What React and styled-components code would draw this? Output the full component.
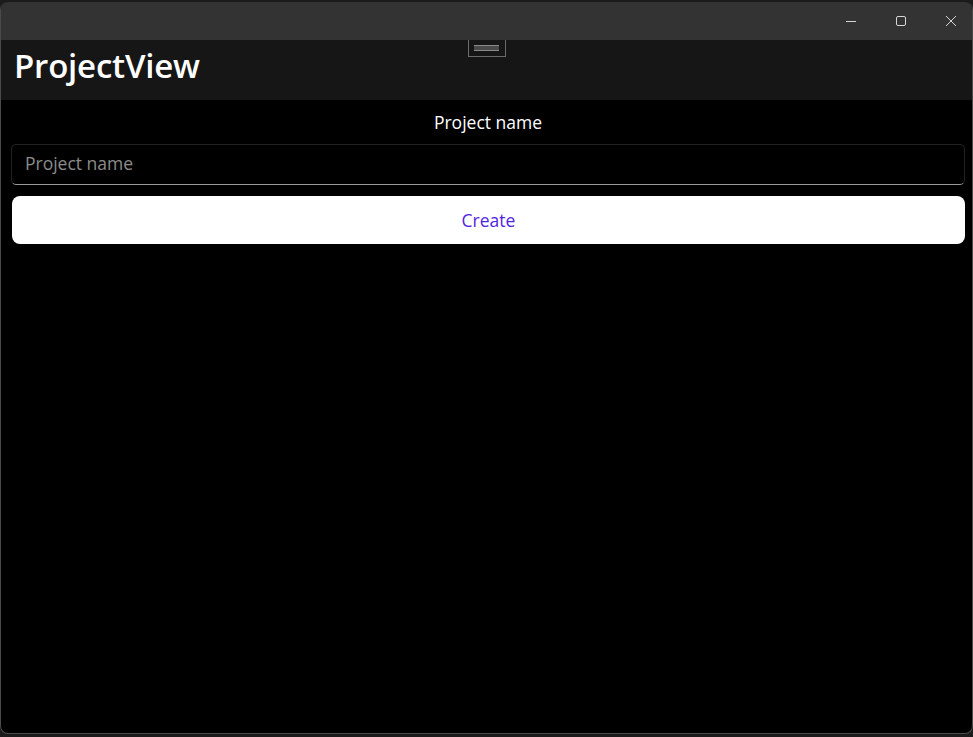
import React from 'react';
import styled, { createGlobalStyle } from 'styled-components';

const GlobalStyle = createGlobalStyle`
  html, body {
    margin: 0;
    padding: 0;
    background: #1b1b1b;
    font-family: "Open Sans", "Noto Sans", sans-serif;
  }
  * { box-sizing: border-box; }
`;

const Desktop = styled.div`
  height: 737px;
  padding-top: 2px;
  overflow: hidden;
`;

const Window = styled.div`
  height: 732px;
  display: flex;
  flex-direction: column;
  background: #000;
  border: 1px solid #4a4a4a;
  border-top: none;
  border-radius: 8px;
  overflow: hidden;
`;

const TitleBar = styled.div`
  height: 38px;
  background: #333333;
  display: flex;
  justify-content: flex-end;
  align-items: center;
  padding-right: 0;
`;

const WinButton = styled.button`
  width: 50px;
  height: 38px;
  border: none;
  background: transparent;
  display: flex;
  align-items: center;
  justify-content: center;
  padding: 0 0 0 8px;
  color: #d6d6d6;
`;

const Header = styled.header`
  height: 60px;
  background: #161616;
  display: flex;
  flex-direction: column;
  align-items: center;
  padding: 0 13px;
`;

const Handle = styled.div`
  width: 38px;
  height: 17px;
  border: 1px solid #6b6b6b;
  border-top: none;
  display: flex;
  align-items: center;
  justify-content: center;

  &::before {
    content: "";
    width: 25px;
    height: 4px;
    border-top: 1px solid #8a8a8a;
    border-bottom: 1px solid #8a8a8a;
    background: #4a4a4a;
  }
`;

const AppTitle = styled.h1`
  align-self: flex-start;
  margin: -13px 0 0;
  color: #fff;
  font-size: 33px;
  font-weight: 600;
  line-height: 44px;
  letter-spacing: -0.2px;
`;

const Content = styled.main`
  display: flex;
  flex-direction: column;
  gap: 10px;
  padding: 10px 7px 0 10px;
`;

const Label = styled.label`
  text-align: center;
  color: #fff;
  font-size: 17.5px;
  line-height: 24px;
`;

const Input = styled.input`
  height: 41px;
  background: #000;
  border: 1px solid #222;
  border-bottom: 1px solid #9a9a9a;
  border-radius: 5px;
  padding: 0 13px 4px;
  font-family: inherit;
  font-size: 17.5px;
  color: #fff;
  outline: none;

  &::placeholder { color: #8c8c8c; }
`;

const CreateButton = styled.button`
  height: 48px;
  margin-top: 1px;
  margin-left: 1px;
  background: #fff;
  border: none;
  border-radius: 8px;
  color: #5423e0;
  font-family: inherit;
  font-size: 17.5px;
`;

export default function App() {
  return (
    <>
      <GlobalStyle />
      <Desktop>
        <Window>
          <TitleBar>
            <WinButton aria-label="Minimize">
              <svg width="12" height="12" viewBox="0 0 12 12">
                <path d="M1 6.5h10" stroke="currentColor" strokeWidth="1" />
              </svg>
            </WinButton>
            <WinButton aria-label="Maximize">
              <svg width="12" height="12" viewBox="0 0 12 12">
                <rect x="1.5" y="1.5" width="9" height="9" rx="1.5" fill="none" stroke="currentColor" strokeWidth="1" />
              </svg>
            </WinButton>
            <WinButton aria-label="Close">
              <svg width="12" height="12" viewBox="0 0 12 12">
                <path d="M1 1l10 10M11 1L1 11" stroke="currentColor" strokeWidth="1" />
              </svg>
            </WinButton>
          </TitleBar>
          <Header>
            <Handle />
            <AppTitle>ProjectView</AppTitle>
          </Header>
          <Content>
            <Label htmlFor="pname">Project name</Label>
            <Input id="pname" placeholder="Project name" />
            <CreateButton>Create</CreateButton>
          </Content>
        </Window>
      </Desktop>
    </>
  );
}
